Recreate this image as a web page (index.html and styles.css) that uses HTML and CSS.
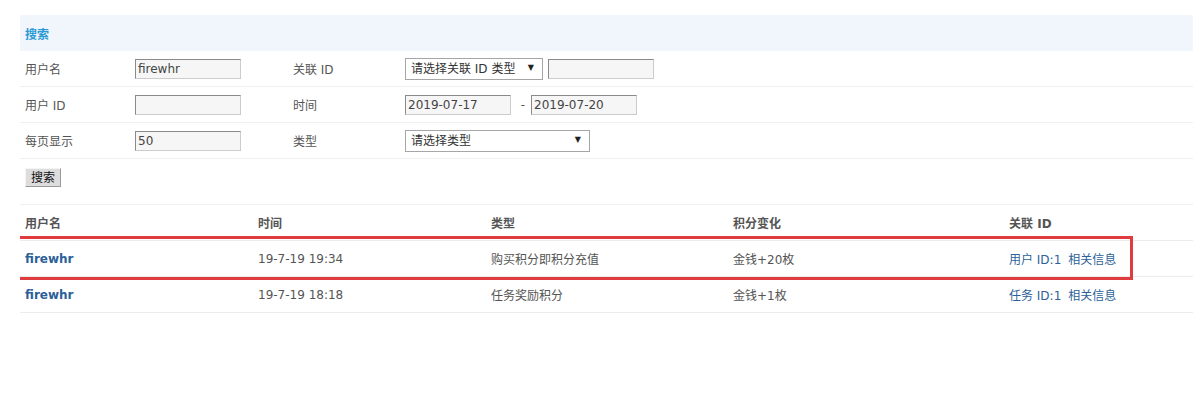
FILE: index.html
```html
<!DOCTYPE html>
<html lang="zh-CN">
<head>
    <meta charset="UTF-8">
    <title>积分记录</title>
    <link rel="stylesheet" href="styles.css">
</head>
<body>

<form class="search-form">
    <table class="search-table">
        <colgroup>
            <col class="col-label">
            <col class="col-field">
            <col class="col-label2">
            <col>
        </colgroup>
        <tr class="search-head">
            <th colspan="4">搜索</th>
        </tr>
        <tr class="search-row">
            <td>用户名</td>
            <td><input type="text" class="text-input" value="firewhr"></td>
            <td>关联 ID</td>
            <td>
                <span class="select-box select-idtype">
                    <select>
                        <option>请选择关联 ID 类型</option>
                    </select>
                </span>
                <input type="text" class="text-input">
            </td>
        </tr>
        <tr class="search-row">
            <td>用户 ID</td>
            <td><input type="text" class="text-input"></td>
            <td>时间</td>
            <td>
                <input type="text" class="text-input" value="2019-07-17">
                <span class="date-sep">-</span>
                <input type="text" class="text-input" value="2019-07-20">
            </td>
        </tr>
        <tr class="search-row">
            <td>每页显示</td>
            <td><input type="text" class="text-input" value="50"></td>
            <td>类型</td>
            <td>
                <span class="select-box select-type">
                    <select>
                        <option>请选择类型</option>
                    </select>
                </span>
            </td>
        </tr>
        <tr class="button-row">
            <td colspan="4"><button type="button" class="search-btn">搜索</button></td>
        </tr>
    </table>
</form>

<div class="list-wrap">
    <table class="list-table">
        <colgroup>
            <col class="col-user">
            <col class="col-time">
            <col class="col-kind">
            <col class="col-change">
            <col>
        </colgroup>
        <thead>
            <tr>
                <th>用户名</th>
                <th>时间</th>
                <th>类型</th>
                <th>积分变化</th>
                <th>关联 ID</th>
            </tr>
        </thead>
        <tbody>
            <tr>
                <td><a href="#" class="user-link">firewhr</a></td>
                <td>19-7-19 19:34</td>
                <td>购买积分即积分充值</td>
                <td>金钱+20枚</td>
                <td><a href="#" class="info-link">用户 ID:1</a><a href="#" class="info-link">相关信息</a></td>
            </tr>
            <tr>
                <td><a href="#" class="user-link">firewhr</a></td>
                <td>19-7-19 18:18</td>
                <td>任务奖励积分</td>
                <td>金钱+1枚</td>
                <td><a href="#" class="info-link">任务 ID:1</a><a href="#" class="info-link">相关信息</a></td>
            </tr>
        </tbody>
    </table>
    <!-- 标注框 -->
    <div class="mark-box"></div>
</div>

</body>
</html>
```

FILE: styles.css
```css
body {
    margin: 15px 0 0 20px;
    background: #fff;
    font-family: "DejaVu Sans", "Noto Sans CJK SC", sans-serif;
    font-size: 12px;
    color: #555;
}
table {
    width: 100%;
    table-layout: fixed;
    border-collapse: separate;
    border-spacing: 0;
}
td, th {
    padding: 0 5px;
    text-align: left;
    vertical-align: middle;
}
.search-form {
    margin: 0;
}
.col-label { width: 110px; }
.col-field { width: 158px; }
.col-label2 { width: 112px; }
.search-head th {
    height: 36px;
    background: #f1f5fc;
    color: #2a9ad4;
    font-weight: bold;
    font-size: 12px;
}
.search-row td {
    height: 35px;
    border-bottom: 1px solid #efefef;
}
.button-row td {
    height: 36px;
}
.text-input {
    width: 106px;
    height: 20px;
    box-sizing: border-box;
    margin: 0;
    padding: 0 2px;
    border: 1px solid #ccc;
    border-top-color: #8a8a8a;
    border-left-color: #8a8a8a;
    background: #f6f6f6;
    font-family: "DejaVu Sans", "Noto Sans CJK SC", sans-serif;
    font-size: 12px;
    color: #444;
    vertical-align: middle;
}
.date-sep {
    display: inline-block;
    margin: 0 2px 0 6px;
    vertical-align: middle;
}
.select-box {
    position: relative;
    display: inline-block;
    vertical-align: middle;
    margin-right: 1px;
}
.select-box::after {
    content: "\25BC";
    position: absolute;
    right: 9px;
    top: 5px;
    font-size: 8px;
    color: #222;
    pointer-events: none;
}
.select-box select {
    appearance: none;
    -webkit-appearance: none;
    display: block;
    height: 22px;
    margin: 0;
    padding: 0 5px;
    border: 1px solid #a6a6a6;
    background: #fff;
    font-family: "DejaVu Sans", "Noto Sans CJK SC", sans-serif;
    font-size: 12px;
    color: #333;
}
.select-idtype select { width: 138px; }
.select-type select { width: 185px; }
.search-btn {
    width: 36px;
    height: 19px;
    margin: 0;
    padding: 0;
    background: #ddd;
    border: 1px solid #999;
    border-top-color: #f4f4f4;
    border-left-color: #f4f4f4;
    font-family: "Noto Sans CJK SC", sans-serif;
    font-size: 12px;
    line-height: 16px;
    color: #111;
}

.list-wrap {
    position: relative;
    margin-top: 9px;
}
.col-user { width: 233px; }
.col-time { width: 233px; }
.col-kind { width: 242px; }
.col-change { width: 276px; }
.list-table th {
    height: 35px;
    border-top: 1px solid #f1f1f1;
    border-bottom: 1px solid #ececec;
    font-weight: bold;
    color: #555;
}
.list-table td {
    height: 35px;
    border-bottom: 1px solid #ececec;
    color: #555;
}
.user-link {
    color: #2d5f99;
    font-weight: bold;
    text-decoration: none;
}
.info-link {
    color: #2d5f99;
    text-decoration: none;
    margin-right: 7px;
}
.mark-box {
    position: absolute;
    left: -13px;
    top: 32px;
    width: 1126px;
    height: 44px;
    box-sizing: border-box;
    border: 3px solid #e03b3f;
    pointer-events: none;
}
```
